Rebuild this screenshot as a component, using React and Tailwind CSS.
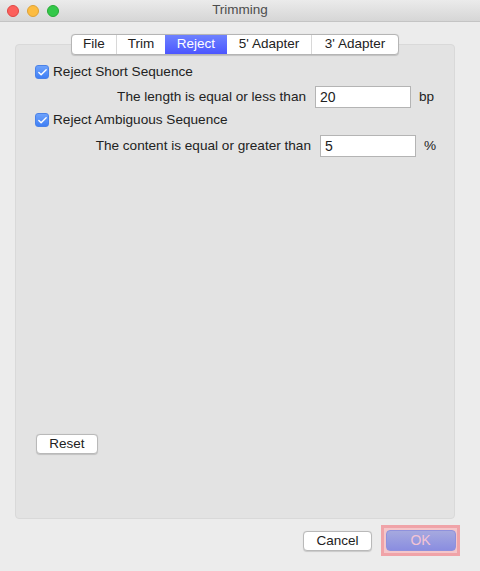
import { Check } from 'lucide-react';

const tabs = [
    { label: 'File', w: 'w-[44px]' },
    { label: 'Trim', w: 'w-[49px]' },
    { label: 'Reject', w: 'w-[62px]', active: true },
    { label: "5' Adapter", w: 'w-[84px]' },
    { label: "3' Adapter", w: 'w-[87px]' },
];

const CheckBox = () => (
    <div className="h-[14px] w-[14px] shrink-0 rounded-[3px] bg-gradient-to-b from-[#6ea2fb] to-[#3f7ff5] border border-[#4a82e8] flex items-center justify-center">
        <Check className="h-[11px] w-[11px] text-white" strokeWidth={3} />
    </div>
);

const MacButton = ({ children, className = '' }) => (
    <button className={`h-[20px] rounded-[4px] bg-white border border-[#b9b9b9] shadow-[0_0.5px_1px_rgba(0,0,0,0.15)] text-[13.5px] text-[#222] leading-none ${className}`}>
        {children}
    </button>
);

export default function App() {
    return (
        <div className="w-[480px] h-[571px] bg-[#ececec] flex flex-col font-['Liberation_Sans',Arial,sans-serif] text-[13.6px] text-[#222] overflow-hidden">
            {/* title bar */}
            <div className="relative h-[22px] shrink-0 bg-gradient-to-b from-[#ebebeb] to-[#d6d6d6] border-b border-[#c4c4c4] flex items-center justify-center">
                <div className="absolute left-[7px] top-[5px] flex gap-[8px]">
                    <span className="h-[12px] w-[12px] rounded-full bg-[#fc605c] border border-[#df4744]" />
                    <span className="h-[12px] w-[12px] rounded-full bg-[#fdbc40] border border-[#dea236]" />
                    <span className="h-[12px] w-[12px] rounded-full bg-[#34c84a] border border-[#27aa35]" />
                </div>
                <span className="text-[13.5px] text-[#4d4d4d]">Trimming</span>
            </div>

            {/* tabs + panel */}
            <div className="flex flex-col w-[440px] ml-[15px] pt-[12px]">
                <div className="relative z-10 self-center flex h-[21px] rounded-[4px] bg-white border border-[#b5b5b5] shadow-[0_0.5px_1px_rgba(0,0,0,0.15)] overflow-hidden text-[13.5px]">
                    {tabs.map((t, i) => (
                        <div
                            key={t.label}
                            className={`${t.w} flex items-center justify-center ${i > 0 && !t.active && !tabs[i - 1].active ? 'border-l border-[#d8d8d8]' : ''} ${t.active ? 'bg-gradient-to-b from-[#6e81ff] to-[#4c55ff] text-white' : 'text-[#222]'}`}
                        >
                            {t.label}
                        </div>
                    ))}
                </div>

                <div className="-mt-[11px] h-[475px] rounded-[4px] bg-[#e3e3e3] border border-[#d9d9d9] flex flex-col pt-[19px] pl-[19px] pb-[64px]">
                    <div className="flex items-center h-[16px] gap-[4px]">
                        <CheckBox />
                        <span>Reject Short Sequence</span>
                    </div>
                    <div className="flex items-center mt-[6px] -ml-[19px]">
                        <span className="w-[290px] text-right whitespace-nowrap">The length is equal or less than</span>
                        <div className="ml-[9px] w-[96px] h-[22px] bg-white border border-[#b4b4b4] flex items-center px-[4px] text-[14px]">20</div>
                        <span className="ml-[8px]">bp</span>
                    </div>
                    <div className="flex items-center h-[16px] gap-[4px] mt-[4px]">
                        <CheckBox />
                        <span>Reject Ambiguous Sequence</span>
                    </div>
                    <div className="flex items-center mt-[7px] -ml-[19px]">
                        <span className="w-[295px] text-right whitespace-nowrap">The content is equal or greater than</span>
                        <div className="ml-[9px] w-[96px] h-[22px] bg-white border border-[#b4b4b4] flex items-center px-[4px] text-[14px]">5</div>
                        <span className="ml-[8px]">%</span>
                    </div>
                    <div className="flex-1" />
                    <MacButton className="w-[62px] ml-[1px]">Reset</MacButton>
                </div>
            </div>

            {/* footer buttons */}
            <div className="flex justify-end items-center pt-[6px] pr-[20px] gap-[9px]">
                <MacButton className="w-[69px]">Cancel</MacButton>
                <div className="w-[79px] h-[31px] bg-[#f4c6ca] border-[3px] border-[#f0a3a8] flex items-center justify-center">
                    <div className="w-[70px] h-[21px] rounded-[4px] bg-gradient-to-b from-[#a6a9df] to-[#8a8de0] border border-[#8f91dc] flex items-center justify-center text-[#f3c4d4] text-[14px]">
                        OK
                    </div>
                </div>
            </div>
        </div>
    );
}
